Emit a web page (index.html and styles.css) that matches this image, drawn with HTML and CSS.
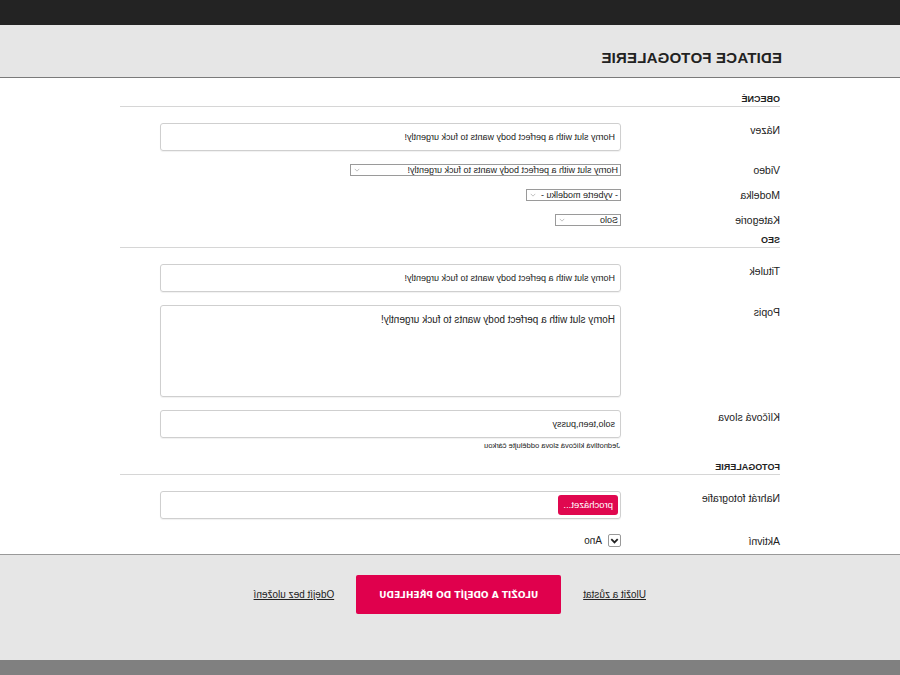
FILE: index.html
```html
<!DOCTYPE html>
<html lang="cs">
<head>
    <meta charset="UTF-8">
    <meta name="viewport" content="width=device-width, initial-scale=1.0">
    <title>Editace fotogalerie</title>
    <link rel="stylesheet" href="styles.css">
</head>
<body>
    <div class="page">
        <div class="topbar"></div>

        <div class="header">
            <h1>EDITACE FOTOGALERIE</h1>
        </div>

        <div class="form">
            <h3 class="section">OBECNÉ</h3>

            <div class="row row-input">
                <label>Název</label>
                <div class="field"><div class="input">Horny slut with a perfect body wants to fuck urgently!</div></div>
            </div>

            <div class="row row-select">
                <label>Video</label>
                <div class="field"><div class="select w-video">Horny slut with a perfect body wants to fuck urgently!<svg viewBox="0 0 8 5"><path d="M1 1l3 3 3-3" fill="none" stroke="#999" stroke-width="0.8"/></svg></div></div>
            </div>

            <div class="row row-select">
                <label>Modelka</label>
                <div class="field"><div class="select w-model">- vyberte modelku -<svg viewBox="0 0 8 5"><path d="M1 1l3 3 3-3" fill="none" stroke="#999" stroke-width="0.8"/></svg></div></div>
            </div>

            <div class="row row-select">
                <label>Kategorie</label>
                <div class="field"><div class="select w-cat">Solo<svg viewBox="0 0 8 5"><path d="M1 1l3 3 3-3" fill="none" stroke="#999" stroke-width="0.8"/></svg></div></div>
            </div>

            <h3 class="section section-seo">SEO</h3>

            <div class="row row-input">
                <label>Titulek</label>
                <div class="field"><div class="input">Horny slut with a perfect body wants to fuck urgently!</div></div>
            </div>

            <div class="row row-input">
                <label>Popis</label>
                <div class="field"><div class="input textarea">Horny slut with a perfect body wants to fuck urgently!</div></div>
            </div>

            <div class="row row-input">
                <label>Klíčová slova</label>
                <div class="field">
                    <div class="input">solo,teen,pussy</div>
                    <div class="hint">Jednotlivá klíčová slova oddělujte čárkou</div>
                </div>
            </div>

            <h3 class="section section-foto">FOTOGALERIE</h3>

            <div class="row row-input">
                <label>Nahrát fotografie</label>
                <div class="field"><div class="input file"><span class="browse">procházet...</span></div></div>
            </div>

            <div class="row row-check">
                <label>Aktivní</label>
                <div class="field check">
                    <span class="box"><svg viewBox="0 0 12 12"><path d="M2.5 4.5l3.5 3.5 3.5-3.5" fill="none" stroke="#222" stroke-width="2"/></svg></span>
                    Ano
                </div>
            </div>
        </div>

        <div class="footer">
            <a href="#">Uložit a zůstat</a>
            <button>ULOŽIT A ODEJÍT DO PŘEHLEDU</button>
            <a href="#">Odejít bez uložení</a>
        </div>
        <div class="bottombar"></div>
    </div>
</body>
</html>
```

FILE: styles.css
```css
body {
    margin: 0;
    font-family: "Liberation Sans", Arial, sans-serif;
    color: #222;
    background-color: #fff;
}
.page {
    width: 900px;
    height: 675px;
    overflow: hidden;
    transform: scaleX(-1);
    display: flex;
    flex-direction: column;
}
.topbar {
    height: 25px;
    background-color: #232323;
}
.header {
    height: 52px;
    background-color: #e6e6e6;
    border-bottom: 1px solid #7a7a7a;
    padding-left: 118px;
}
.header h1 {
    margin: 0;
    padding-top: 24px;
    font-size: 15px;
    line-height: 18px;
    letter-spacing: 0.2px;
}
.form {
    flex: 1;
    padding: 0 120px;
}
.section {
    margin: 0;
    font-size: 9px;
    font-weight: bold;
    line-height: 11px;
    padding: 16px 0 1px;
    border-bottom: 1px solid #d6d6d6;
}
.section-seo {
    padding-top: 0;
    margin-top: 9px;
}
.section-foto {
    padding-top: 12px;
}
.row {
    display: grid;
    grid-template-columns: 159px 461px;
}
.row label {
    font-size: 10.5px;
    line-height: 12px;
}
.row-input {
    margin-top: 13px;
}
.section + .row-input {
    margin-top: 16px;
}
.row-input label {
    padding-top: 1px;
}
.input {
    height: 26px;
    border: 1px solid #cfcfcf;
    border-radius: 3px;
    box-shadow: 0 1px 1px rgba(0, 0, 0, 0.06);
    font-size: 9px;
    line-height: 26px;
    padding-left: 5px;
    white-space: nowrap;
}
.textarea {
    height: 92px;
    line-height: 12px;
    padding-top: 8px;
    box-sizing: border-box;
    font-size: 10px;
}
.hint {
    font-size: 7.5px;
    line-height: 9px;
    margin-top: 3px;
    padding-left: 1px;
}
.file {
    display: flex;
    align-items: center;
    padding-left: 2px;
}
.browse {
    background-color: #e0084f;
    color: #fff;
    border-radius: 3px;
    height: 20px;
    line-height: 20px;
    padding: 0 5px;
    font-size: 9.5px;
}
.row-select {
    margin-top: 13px;
    align-items: center;
}
.select {
    display: flex;
    align-items: center;
    justify-content: space-between;
    height: 10px;
    border: 1px solid #9a9a9a;
    font-size: 9px;
    line-height: 10px;
    padding: 0 3px 0 2px;
    white-space: nowrap;
}
.select svg {
    width: 6px;
    height: 4px;
}
.w-video {
    width: 264px;
}
.w-model {
    width: 88px;
}
.w-cat {
    width: 59px;
}
.row-check {
    margin-top: 15px;
    align-items: center;
}
.check {
    display: flex;
    align-items: center;
    gap: 6px;
    font-size: 10px;
}
.box {
    width: 11px;
    height: 11px;
    border: 1px solid #999;
    border-radius: 2px;
    display: flex;
}
.box svg {
    width: 11px;
    height: 11px;
}
.footer {
    margin-top: auto;
    background-color: #e6e6e6;
    border-top: 1px solid #999;
    display: flex;
    align-items: flex-start;
    gap: 22px;
    padding: 20px 0 0 254px;
    box-sizing: border-box;
    height: 106px;
}
.footer a {
    color: #222;
    font-size: 10px;
    line-height: 39px;
}
.footer button {
    width: 205px;
    height: 39px;
    background-color: #e0004d;
    color: #fff;
    border: none;
    border-radius: 2px;
    font-family: "DejaVu Sans", sans-serif;
    font-weight: bold;
    font-size: 9px;
    cursor: pointer;
}
.bottombar {
    height: 15px;
    background-color: #808080;
}
```
